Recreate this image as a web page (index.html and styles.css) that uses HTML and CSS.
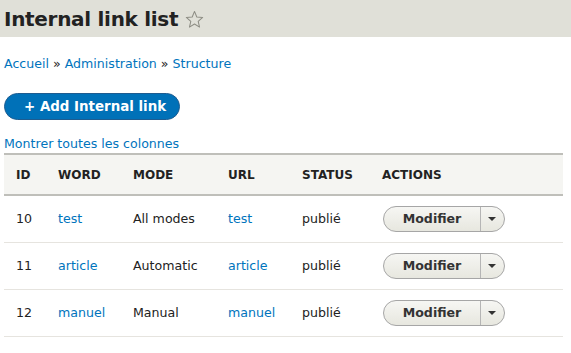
FILE: index.html
```html
<!DOCTYPE html>
<html>
<head>
<meta charset="utf-8">
<link rel="stylesheet" href="styles.css">
</head>
<body>
<header class="page-head">
  <h1 class="title">Internal link list</h1>
  <svg class="star" width="19" height="19" viewBox="0 0 20 20"><path d="M10 1.5 L12.4 7.3 L18.6 7.8 L13.9 11.9 L15.3 18 L10 14.8 L4.7 18 L6.1 11.9 L1.4 7.8 L7.6 7.3 Z" fill="none" stroke="#8d8d84" stroke-width="1.1" stroke-linejoin="round"/></svg>
</header>
<main class="content">
  <nav class="breadcrumb"><a href="#">Accueil</a> » <a href="#">Administration</a> » <a href="#">Structure</a></nav>
  <div class="actions-bar"><a class="btn-primary" href="#">+ Add Internal link</a></div>
  <a class="show-cols" href="#">Montrer toutes les colonnes</a>
  <table class="list">
    <colgroup><col class="w-id"><col class="w-word"><col class="w-mode"><col class="w-url"><col class="w-status"><col></colgroup>
    <thead>
      <tr><th>ID</th><th>WORD</th><th>MODE</th><th>URL</th><th>STATUS</th><th>ACTIONS</th></tr>
    </thead>
    <tbody>
      <tr><td>10</td><td><a href="#">test</a></td><td>All modes</td><td><a href="#">test</a></td><td>publié</td><td><span class="drop"><span class="drop-main">Modifier</span><span class="drop-toggle"></span></span></td></tr>
      <tr><td>11</td><td><a href="#">article</a></td><td>Automatic</td><td><a href="#">article</a></td><td>publié</td><td><span class="drop"><span class="drop-main">Modifier</span><span class="drop-toggle"></span></span></td></tr>
      <tr><td>12</td><td><a href="#">manuel</a></td><td>Manual</td><td><a href="#">manuel</a></td><td>publié</td><td><span class="drop"><span class="drop-main">Modifier</span><span class="drop-toggle"></span></span></td></tr>
    </tbody>
  </table>
</main>
</body>
</html>
```
FILE: styles.css
```css
html, body { margin: 0; padding: 0; background: #fff; }
body { font-family: "DejaVu Sans", "Lucida Grande", sans-serif; color: #222; font-size: 13px; }
a { color: #0074bd; text-decoration: none; }
.page-head { background: #e0e0d8; height: 37px; display: flex; align-items: center; padding-left: 4px; }
.title { margin: 0; font-size: 20px; font-weight: bold; color: #222; letter-spacing: -0.3px; }
.star { margin-left: 7px; margin-top: 1px; }
.content { padding: 0 8px 0 4px; }
.breadcrumb { margin-top: 18px; font-size: 12.6px; line-height: 17px; }
.actions-bar { margin-top: 21px; }
.btn-primary { display: inline-block; background: #0071b8; color: #fff; font-weight: bold; font-size: 13.4px; line-height: 25px; height: 27px; padding: 0 0 0 19px; border-radius: 14px; border: 1px solid #1e5c90; box-sizing: border-box; width: 176px; }
.show-cols { display: block; margin-top: 16px; font-size: 12.6px; line-height: 15px; }
.list { width: 559px; border-collapse: collapse; margin-top: 2px; table-layout: fixed; }
.w-id { width: 42px; }
.w-word { width: 75px; }
.w-mode { width: 95px; }
.w-url { width: 74px; }
.w-status { width: 80px; }
.list th { background: #f5f5f2; border-top: 2px solid #bfbfba; border-bottom: 2px solid #bfbfba; text-align: left; font-size: 12px; font-weight: bold; height: 41px; padding: 0 0 0 12px; box-sizing: border-box; }
.list td { height: 47px; padding: 0 0 0 12px; border-bottom: 1px solid #e6e4df; font-size: 12.6px; box-sizing: border-box; }
.list td:last-child { padding-left: 13px; }
.drop { display: inline-flex; vertical-align: middle; height: 26px; border: 1px solid #a6a6a6; border-radius: 13px; background: linear-gradient(#f6f6f3, #e7e7df); box-sizing: border-box; }
.drop-main { width: 96px; text-align: center; font-weight: bold; line-height: 24px; font-size: 12.6px; color: #333; border-right: 1px solid #b5b5b5; }
.drop-toggle { width: 23px; position: relative; }
.drop-toggle::after { content: ""; position: absolute; left: 7px; top: 10px; border-left: 4px solid transparent; border-right: 4px solid transparent; border-top: 4px solid #333; }
```
